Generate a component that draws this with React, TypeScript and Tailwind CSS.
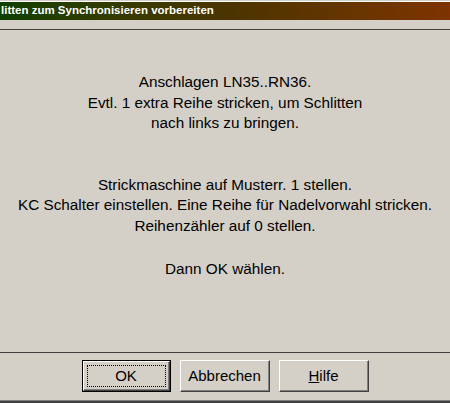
import React from 'react';

const font = { fontFamily: '"Liberation Sans", Arial, sans-serif' };

function DlgButton({ children, isDefault }: { children: React.ReactNode; isDefault?: boolean }) {
  if (isDefault) {
    return (
      <div className="w-[89px] h-[32px] border border-black">
        <div className="w-full h-full border border-t-white border-l-white border-r-[#404040] border-b-[#404040] shadow-[inset_-1px_-1px_0_#808080] flex items-center justify-center p-[3px]">
          <div className="w-full h-full border border-dotted border-black flex items-center justify-center text-[15px] text-black">
            {children}
          </div>
        </div>
      </div>
    );
  }
  return (
    <div className="w-[90px] h-[32px] border border-t-white border-l-white border-r-[#404040] border-b-[#404040] shadow-[inset_-1px_-1px_0_#808080] flex items-center justify-center text-[15px] text-black">
      {children}
    </div>
  );
}

export default function App() {
  return (
    <div className="w-[450px] h-[403px] bg-[#d4d0c8] flex flex-col overflow-hidden" style={font}>
      <div className="h-[1px] bg-[#d4d0c8]" />
      <div className="h-[1px] bg-white" />
      <div className="h-[18px] bg-gradient-to-r from-[#0b4000] via-[#4a3400] to-[#7e3300] flex items-center pl-[1px]">
        <span className="text-white font-bold text-[11.5px] leading-none whitespace-nowrap">
          litten zum Synchronisieren vorbereiten
        </span>
      </div>
      <div className="h-[9px]" />
      <div className="h-[1px] bg-[#404040]" />
      <div className="flex-1 pt-[42px] text-center text-black text-[15.3px] leading-[20.5px]">
        <div>Anschlagen LN35..RN36.</div>
        <div>Evtl. 1 extra Reihe stricken, um Schlitten</div>
        <div>nach links zu bringen.</div>
        <div className="h-[41px]" />
        <div>Strickmaschine auf Musterr. 1 stellen.</div>
        <div>KC Schalter einstellen. Eine Reihe für Nadelvorwahl stricken.</div>
        <div>Reihenzähler auf 0 stellen.</div>
        <div className="h-[23px]" />
        <div>Dann OK wählen.</div>
      </div>
      <div className="h-[1px] bg-[#404040]" />
      <div className="h-[47px] pt-[7px] flex justify-center gap-[9px]">
        <DlgButton isDefault>OK</DlgButton>
        <DlgButton>Abbrechen</DlgButton>
        <DlgButton>
          <span><span className="underline">H</span>ilfe</span>
        </DlgButton>
      </div>
      <div className="h-[1px] bg-[#808080]" />
      <div className="h-[2px] bg-[#404040]" />
    </div>
  );
}
